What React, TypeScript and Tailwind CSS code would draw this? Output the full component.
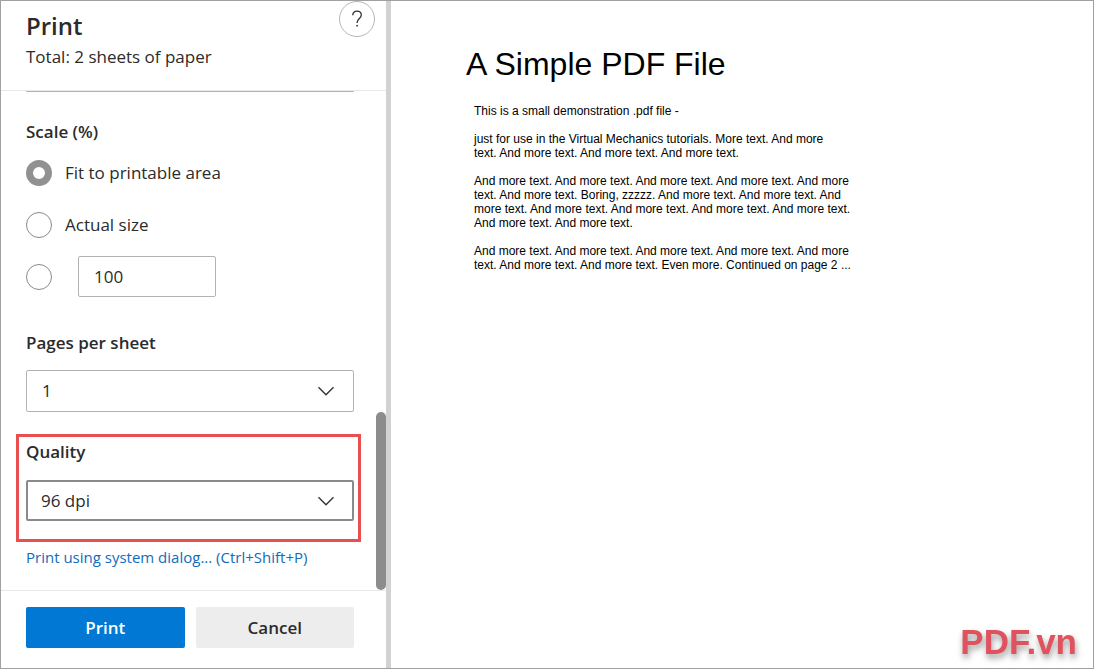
import { useState } from 'react';
import type { ReactNode } from 'react';

const paragraphs = [
  ['This is a small demonstration .pdf file -'],
  [
    'just for use in the Virtual Mechanics tutorials. More text. And more',
    'text. And more text. And more text. And more text.',
  ],
  [
    'And more text. And more text. And more text. And more text. And more',
    'text. And more text. Boring, zzzzz. And more text. And more text. And',
    'more text. And more text. And more text. And more text. And more text.',
    'And more text. And more text.',
  ],
  [
    'And more text. And more text. And more text. And more text. And more',
    'text. And more text. And more text. Even more. Continued on page 2 ...',
  ],
];

const radioClass =
  'size-[26px] shrink-0 appearance-none rounded-full border border-[#8a8a8a] bg-white checked:border-[7px] checked:border-[#919191]';

type SelectProps = {
  id: string;
  className: string;
  value: string;
  onChange: (value: string) => void;
  children: ReactNode;
};

function Select({ id, className, value, onChange, children }: SelectProps) {
  return (
    <div className="relative">
      <select
        id={id}
        value={value}
        onChange={(e) => onChange(e.target.value)}
        className={`block w-full appearance-none rounded-xs bg-white outline-none ${className}`}
      >
        {children}
      </select>
      <svg
        className="pointer-events-none absolute top-1/2 right-[19px] -translate-y-1/2"
        width="18"
        height="10"
        viewBox="0 0 18 10"
        fill="none"
        stroke="#333"
        strokeWidth="1.4"
        aria-hidden="true"
      >
        <path d="M1.5 1.2 9 8.7l7.5-7.5" />
      </svg>
    </div>
  );
}

export default function App() {
  const [scale, setScale] = useState('fit');
  const [percent, setPercent] = useState('100');
  const [pages, setPages] = useState('1');
  const [quality, setQuality] = useState('96');

  return (
    <div className="flex min-h-screen border border-[#a0a0a0] bg-white font-['Open_Sans',sans-serif] text-[17px] leading-6 text-[#2b2b2b]">
      <aside className="flex w-[390px] shrink-0 flex-col border-r-5 border-[#d2d2d2]">
        <header className="flex justify-between border-b border-[#e8e8e8] pr-[11px] pb-[21px] pl-[25px]">
          <div className="pt-[11px]">
            <h1 className="text-2xl leading-7 font-semibold">Print</h1>
            <p className="mt-[5px]">Total: 2 sheets of paper</p>
          </div>
          <button
            type="button"
            aria-label="Help"
            className="flex size-9 items-center justify-center rounded-full border border-[#b5b5b5]"
          >
            <svg width="12" height="18" viewBox="0 0 12 18" fill="none" stroke="#333" strokeWidth="1.3" aria-hidden="true">
              <path d="M1.7 5.2C1.7 2.7 3.6 1.2 6 1.2s4.3 1.5 4.3 3.9c0 3.4-4.2 3.9-4.2 7.3v.6" />
              <circle cx="6.1" cy="15.7" r="0.9" fill="#333" stroke="none" />
            </svg>
          </button>
        </header>

        <div className="relative flex-1 pr-8 pb-[19px] pl-[25px]">
          <div className="h-px rounded-b-xs bg-[#b3b3b3]" />

          <fieldset className="mt-7">
            <legend className="font-semibold">Scale (%)</legend>
            <label className="mt-4 flex h-[26px] items-center gap-[13px]">
              <input type="radio" name="scale" className={radioClass} checked={scale === 'fit'} onChange={() => setScale('fit')} />
              Fit to printable area
            </label>
            <label className="mt-[26px] flex h-[26px] items-center gap-[13px]">
              <input type="radio" name="scale" className={radioClass} checked={scale === 'actual'} onChange={() => setScale('actual')} />
              Actual size
            </label>
            <div className="mt-[18px] flex items-center gap-[26px]">
              <input
                type="radio"
                name="scale"
                aria-label="Custom scale"
                className={radioClass}
                checked={scale === 'custom'}
                onChange={() => setScale('custom')}
              />
              <input
                type="text"
                aria-label="Scale percentage"
                value={percent}
                onChange={(e) => setPercent(e.target.value)}
                className="h-[41px] w-[138px] rounded-xs border border-[#b3b3b3] px-[15px] outline-none"
              />
            </div>
          </fieldset>

          <label htmlFor="pages" className="mt-[34px] mb-[15px] block font-semibold">
            Pages per sheet
          </label>
          <Select id="pages" value={pages} onChange={setPages} className="h-[42px] border border-[#b3b3b3] px-[15px]">
            <option value="1">1</option>
            <option value="2">2</option>
            <option value="4">4</option>
          </Select>

          <div className="-mr-[7px] -ml-2.5 mt-[22px] border-3 border-[#e8504f] pt-[3px] pr-1 pb-[18px] pl-[7px]">
            <label htmlFor="quality" className="mb-4 block font-semibold">
              Quality
            </label>
            <Select id="quality" value={quality} onChange={setQuality} className="h-[41px] border-2 border-[#8a8a8a] px-[13px]">
              <option value="96">96 dpi</option>
              <option value="300">300 dpi</option>
              <option value="600">600 dpi</option>
            </Select>
          </div>

          <a href="#system-dialog" className="mt-[3px] block text-[15px] text-[#0f6cbd]">
            Print using system dialog... (Ctrl+Shift+P)
          </a>

          <div className="absolute right-0 bottom-0 h-[178px] w-2.5 rounded-full bg-[#8c8c8c]" />
        </div>

        <footer className="grid grid-cols-2 gap-[11px] border-t border-[#e8e8e8] pt-4 pr-8 pb-5 pl-[25px] font-semibold">
          <button type="button" className="h-[41px] rounded-xs bg-[#0078d4] text-white">
            Print
          </button>
          <button type="button" className="h-[41px] rounded-xs bg-[#ededed]">
            Cancel
          </button>
        </footer>
      </aside>

      <main className="flex flex-1 flex-col font-['Liberation_Sans',Arial,sans-serif] text-black">
        <article className="pt-[43px] pl-[75px]">
          <h2 className="text-[32px] leading-10">A Simple PDF File</h2>
          <div className="mt-5 space-y-3.5 pl-2 text-[12px] leading-3.5">
            {paragraphs.map((lines, i) => (
              <p key={i}>
                {lines.map((line) => (
                  <span key={line} className="block">
                    {line}
                  </span>
                ))}
              </p>
            ))}
          </div>
        </article>
        <div className="mt-auto mr-4 mb-1.5 self-end text-[35px] leading-10 font-bold text-[#e0525e] drop-shadow-[1px_4px_3px_rgba(0,0,0,0.4)]">
          PDF.vn
        </div>
      </main>
    </div>
  );
}
